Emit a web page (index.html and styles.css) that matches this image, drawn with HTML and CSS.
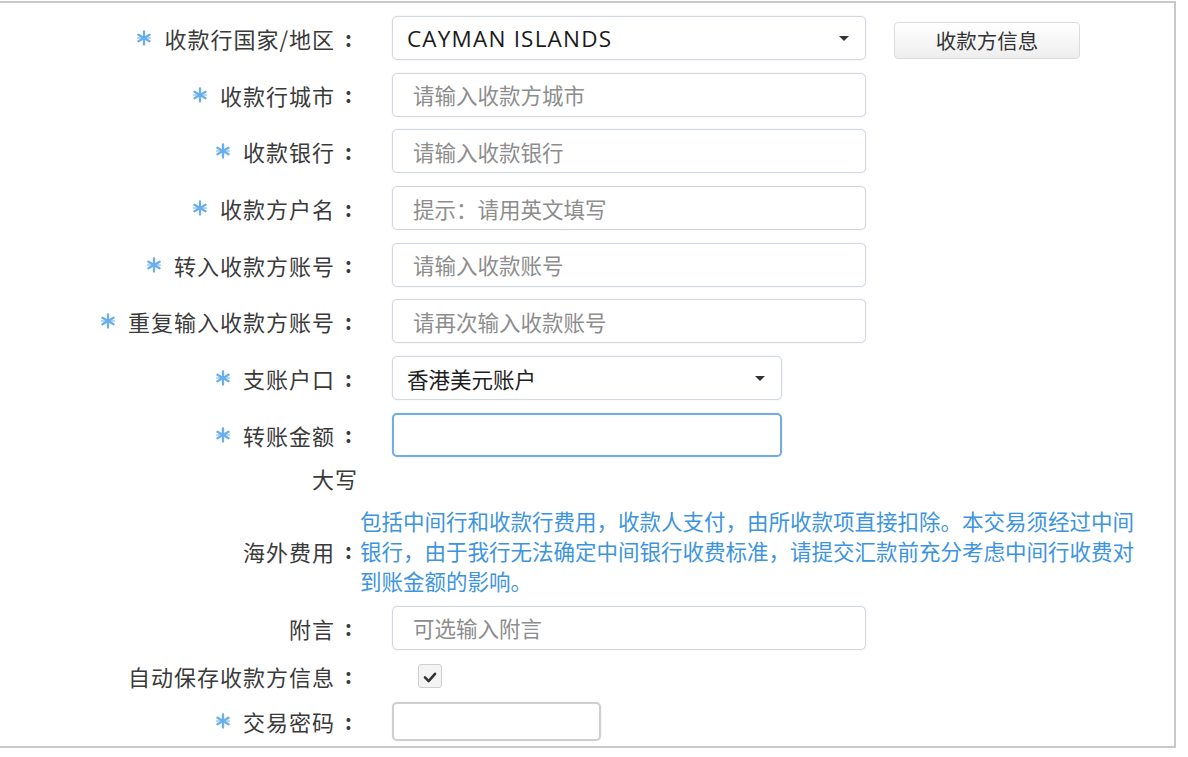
FILE: index.html
```html
<!DOCTYPE html>
<html lang="zh-CN">
<head>
<meta charset="utf-8">
<title>跨境汇款</title>
<link rel="stylesheet" href="styles.css">
</head>
<body>
<div class="panel">
  <div class="grid-rows">
    <div class="row">
      <div class="lbl"><span class="req"><svg viewBox="0 0 16 16" width="16" height="16"><g stroke="currentColor" stroke-width="2.3" stroke-linecap="round"><line x1="8" y1="1.5" x2="8" y2="14.5"/><line x1="2.4" y1="4.8" x2="13.6" y2="11.2"/><line x1="2.4" y1="11.2" x2="13.6" y2="4.8"/><line x1="1.5" y1="8" x2="14.5" y2="8" stroke-width="1.2"/></g></svg></span>收款行国家/地区<span class="colon">:</span></div>
      <div class="ctrl">
        <div class="select w-wide"><span class="latin">CAYMAN ISLANDS</span><span class="caret"></span></div>
        <button class="btn">收款方信息</button>
      </div>
    </div>
    <div class="row">
      <div class="lbl"><span class="req"><svg viewBox="0 0 16 16" width="16" height="16"><g stroke="currentColor" stroke-width="2.3" stroke-linecap="round"><line x1="8" y1="1.5" x2="8" y2="14.5"/><line x1="2.4" y1="4.8" x2="13.6" y2="11.2"/><line x1="2.4" y1="11.2" x2="13.6" y2="4.8"/><line x1="1.5" y1="8" x2="14.5" y2="8" stroke-width="1.2"/></g></svg></span>收款行城市<span class="colon">:</span></div>
      <div class="ctrl"><input class="field w-wide" placeholder="请输入收款方城市"></div>
    </div>
    <div class="row">
      <div class="lbl"><span class="req"><svg viewBox="0 0 16 16" width="16" height="16"><g stroke="currentColor" stroke-width="2.3" stroke-linecap="round"><line x1="8" y1="1.5" x2="8" y2="14.5"/><line x1="2.4" y1="4.8" x2="13.6" y2="11.2"/><line x1="2.4" y1="11.2" x2="13.6" y2="4.8"/><line x1="1.5" y1="8" x2="14.5" y2="8" stroke-width="1.2"/></g></svg></span>收款银行<span class="colon">:</span></div>
      <div class="ctrl"><input class="field w-wide" placeholder="请输入收款银行"></div>
    </div>
    <div class="row">
      <div class="lbl"><span class="req"><svg viewBox="0 0 16 16" width="16" height="16"><g stroke="currentColor" stroke-width="2.3" stroke-linecap="round"><line x1="8" y1="1.5" x2="8" y2="14.5"/><line x1="2.4" y1="4.8" x2="13.6" y2="11.2"/><line x1="2.4" y1="11.2" x2="13.6" y2="4.8"/><line x1="1.5" y1="8" x2="14.5" y2="8" stroke-width="1.2"/></g></svg></span>收款方户名<span class="colon">:</span></div>
      <div class="ctrl"><input class="field w-wide" placeholder="提示：请用英文填写"></div>
    </div>
    <div class="row">
      <div class="lbl"><span class="req"><svg viewBox="0 0 16 16" width="16" height="16"><g stroke="currentColor" stroke-width="2.3" stroke-linecap="round"><line x1="8" y1="1.5" x2="8" y2="14.5"/><line x1="2.4" y1="4.8" x2="13.6" y2="11.2"/><line x1="2.4" y1="11.2" x2="13.6" y2="4.8"/><line x1="1.5" y1="8" x2="14.5" y2="8" stroke-width="1.2"/></g></svg></span>转入收款方账号<span class="colon">:</span></div>
      <div class="ctrl"><input class="field w-wide" placeholder="请输入收款账号"></div>
    </div>
    <div class="row">
      <div class="lbl"><span class="req"><svg viewBox="0 0 16 16" width="16" height="16"><g stroke="currentColor" stroke-width="2.3" stroke-linecap="round"><line x1="8" y1="1.5" x2="8" y2="14.5"/><line x1="2.4" y1="4.8" x2="13.6" y2="11.2"/><line x1="2.4" y1="11.2" x2="13.6" y2="4.8"/><line x1="1.5" y1="8" x2="14.5" y2="8" stroke-width="1.2"/></g></svg></span>重复输入收款方账号<span class="colon">:</span></div>
      <div class="ctrl"><input class="field w-wide" placeholder="请再次输入收款账号"></div>
    </div>
    <div class="row">
      <div class="lbl"><span class="req"><svg viewBox="0 0 16 16" width="16" height="16"><g stroke="currentColor" stroke-width="2.3" stroke-linecap="round"><line x1="8" y1="1.5" x2="8" y2="14.5"/><line x1="2.4" y1="4.8" x2="13.6" y2="11.2"/><line x1="2.4" y1="11.2" x2="13.6" y2="4.8"/><line x1="1.5" y1="8" x2="14.5" y2="8" stroke-width="1.2"/></g></svg></span>支账户口<span class="colon">:</span></div>
      <div class="ctrl">
        <div class="select w-mid"><span>香港美元账户</span><span class="caret"></span></div>
      </div>
    </div>
    <div class="row">
      <div class="lbl"><span class="req"><svg viewBox="0 0 16 16" width="16" height="16"><g stroke="currentColor" stroke-width="2.3" stroke-linecap="round"><line x1="8" y1="1.5" x2="8" y2="14.5"/><line x1="2.4" y1="4.8" x2="13.6" y2="11.2"/><line x1="2.4" y1="11.2" x2="13.6" y2="4.8"/><line x1="1.5" y1="8" x2="14.5" y2="8" stroke-width="1.2"/></g></svg></span>转账金额<span class="colon">:</span></div>
      <div class="ctrl"><input class="field w-mid focus"></div>
    </div>
  </div>

  <div class="row row-daxie">
    <div class="lbl lbl-plain">大写</div>
  </div>

  <div class="row row-fee">
    <div class="lbl">海外费用<span class="colon">:</span></div>
    <p class="fee-text">包括中间行和收款行费用，收款人支付，由所收款项直接扣除。本交易须经过中间银行，由于我行无法确定中间银行收费标准，请提交汇款前充分考虑中间行收费对到账金额的影响。</p>
  </div>

  <div class="row row-memo">
    <div class="lbl">附言<span class="colon">:</span></div>
    <div class="ctrl"><input class="field w-wide" placeholder="可选输入附言"></div>
  </div>

  <div class="row row-check">
    <div class="lbl">自动保存收款方信息<span class="colon">:</span></div>
    <div class="ctrl">
      <span class="checkbox"><svg viewBox="0 0 24 24" width="24" height="24"><path d="M6.5 12.5 L10.5 16.5 L17.5 8.5" fill="none" stroke="#333" stroke-width="2.8" stroke-linecap="round" stroke-linejoin="round"/></svg></span>
    </div>
  </div>

  <div class="row row-pwd">
    <div class="lbl"><span class="req"><svg viewBox="0 0 16 16" width="16" height="16"><g stroke="currentColor" stroke-width="2.3" stroke-linecap="round"><line x1="8" y1="1.5" x2="8" y2="14.5"/><line x1="2.4" y1="4.8" x2="13.6" y2="11.2"/><line x1="2.4" y1="11.2" x2="13.6" y2="4.8"/><line x1="1.5" y1="8" x2="14.5" y2="8" stroke-width="1.2"/></g></svg></span>交易密码<span class="colon">:</span></div>
    <div class="ctrl"><input class="field w-short pwd" type="password"></div>
  </div>
</div>
</body>
</html>
```

FILE: styles.css
```css
html, body {
  margin: 0;
  padding: 0;
  background: #ffffff;
}

body {
  font-family: "Noto Sans CJK SC", "Noto Sans", sans-serif;
  color: #333333;
}

.panel {
  box-sizing: border-box;
  width: 1176px;
  height: 747px;
  margin-top: 1px;
  padding-top: 13px;
  border-top: 2px solid #c9c9c9;
  border-right: 2px solid #c9c9c9;
  border-bottom: 2px solid #c9c9c9;
}

.grid-rows {
  display: flex;
  flex-direction: column;
  gap: 12.7px;
}

.row {
  display: flex;
  align-items: center;
  height: 44px;
}

.lbl {
  flex: 0 0 360px;
  width: 360px;
  display: flex;
  align-items: center;
  justify-content: flex-end;
  font-size: 22px;
  letter-spacing: 1px;
  color: #3a3a3a;
  white-space: nowrap;
  line-height: 1;
}

.req {
  display: inline-flex;
  color: #6aaeea;
  margin-right: 12px;
}

.colon {
  display: inline-block;
  width: 23px;
  text-align: center;
  letter-spacing: 0;
  font-weight: 700;
  font-size: 21px;
  margin-left: 2px;
}

.ctrl {
  display: flex;
  align-items: center;
  margin-left: 32px;
  gap: 28px;
}

.field,
.select {
  box-sizing: border-box;
  height: 44px;
  border: 1.5px solid #d2d8e0;
  border-radius: 5px;
  background: #ffffff;
  box-shadow: 0 0 2px #e3e7ec;
  font-family: "Noto Sans CJK SC", "Noto Sans", sans-serif;
  font-size: 21.5px;
  color: #222222;
  padding: 0 0 0 20px;
  outline: none;
}

.field::placeholder {
  color: #8d8d8d;
}

.w-wide { width: 474px; }
.w-mid { width: 390px; }
.w-short { width: 209px; }

.select {
  display: flex;
  align-items: center;
  justify-content: space-between;
  padding: 0 16px 0 14px;
  color: #1e1e1e;
}

.latin {
  font-family: "Open Sans", "Noto Sans", sans-serif;
  font-size: 22.5px;
  letter-spacing: 1.2px;
  color: #1a1a1a;
}

.caret {
  width: 0;
  height: 0;
  border-left: 5px solid transparent;
  border-right: 5px solid transparent;
  border-top: 5px solid #333333;
}

.focus {
  border: 2px solid #74abe3;
  box-shadow: 0 0 2px #cfe2f6;
}

.btn {
  box-sizing: border-box;
  width: 186px;
  height: 37px;
  border: 1px solid #dcdcdc;
  border-radius: 4px;
  background: linear-gradient(#ffffff, #eeeeee);
  font-family: "Noto Sans CJK SC", sans-serif;
  font-size: 20.5px;
  color: #333333;
  padding: 0;
  margin-top: 4px;
}

.row-daxie {
  height: 30px;
  margin-top: 6px;
}

.lbl-plain {
  padding-right: 2px;
  box-sizing: border-box;
}

.row-fee {
  height: 90px;
  margin-top: 13px;
}

.fee-text {
  margin: 0;
  width: 790px;
  font-size: 21.5px;
  line-height: 30px;
  color: #3d94de;
}

.row-memo {
  margin-top: 10px;
}

.row-check {
  height: 24px;
  margin-top: 14px;
}

.checkbox {
  display: inline-flex;
  box-sizing: border-box;
  width: 24px;
  height: 24px;
  margin-left: 26px;
  border: 1px solid #cfcfcf;
  border-radius: 3px;
  background: #f4f4f4;
}

.row-pwd {
  height: 39px;
  margin-top: 14px;
}

.pwd {
  height: 39px;
  border: 2px solid #cfcfcf;
  border-radius: 5px;
}
```
